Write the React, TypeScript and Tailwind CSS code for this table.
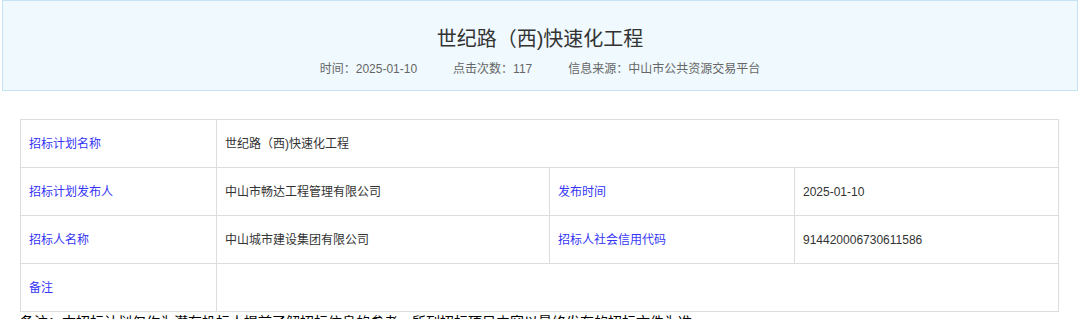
export default function App() {
  const font = { fontFamily: '"Liberation Sans", "Noto Sans CJK SC", sans-serif' };
  const labelCls = 'border border-[#dddddd] pl-2 text-[12px] text-[#3535f5] align-middle';
  const valueCls = 'border border-[#dddddd] pl-2 text-[12px] text-[#333333] align-middle';

  return (
    <div className="w-[1080px] h-[319px] overflow-hidden bg-white" style={font}>
      <div className="mx-[2px] h-[91px] border border-[#c6e2f5] bg-[#eff9fe] flex flex-col items-center">
        <h1 className="mt-[24px] h-[28px] leading-[28px] text-[20px] text-[#333333]">世纪路（西)快速化工程</h1>
        <div className="mt-[8px] flex gap-[36px] text-[12px] leading-[16px] text-[#666666]">
          <span>时间：2025-01-10</span>
          <span>点击次数：117</span>
          <span>信息来源：中山市公共资源交易平台</span>
        </div>
      </div>

      <table className="ml-[20px] mt-[28px] w-[1038px] border-collapse table-fixed border border-[#dddddd]">
        <colgroup>
          <col className="w-[196px]" />
          <col className="w-[333px]" />
          <col className="w-[245px]" />
          <col className="w-[264px]" />
        </colgroup>
        <tbody>
          <tr className="h-[48px]">
            <td className={labelCls}>招标计划名称</td>
            <td className={valueCls} colSpan={3}>世纪路（西)快速化工程</td>
          </tr>
          <tr className="h-[48px]">
            <td className={labelCls}>招标计划发布人</td>
            <td className={valueCls}>中山市畅达工程管理有限公司</td>
            <td className={labelCls}>发布时间</td>
            <td className={valueCls}>2025-01-10</td>
          </tr>
          <tr className="h-[48px]">
            <td className={labelCls}>招标人名称</td>
            <td className={valueCls}>中山城市建设集团有限公司</td>
            <td className={labelCls}>招标人社会信用代码</td>
            <td className={valueCls}>914420006730611586</td>
          </tr>
          <tr className="h-[48px]">
            <td className={labelCls}>备注</td>
            <td className={valueCls} colSpan={3}></td>
          </tr>
        </tbody>
      </table>

      <p className="ml-[20px] text-[14px] leading-[20px] text-[#000000]">
        备注：本招标计划仅作为潜在投标人提前了解招标信息的参考，所列招标项目内容以最终发布的招标文件为准。
      </p>
    </div>
  );
}
